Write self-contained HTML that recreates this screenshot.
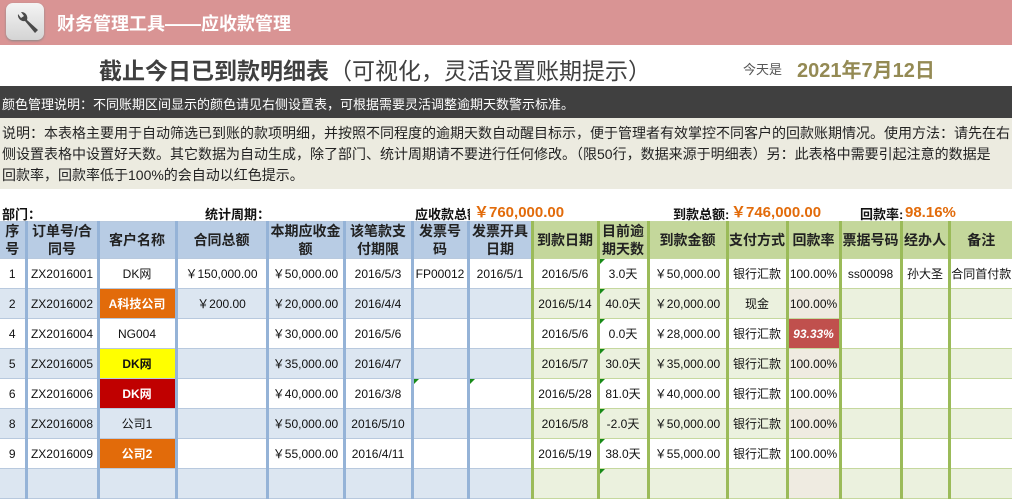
<!DOCTYPE html>
<html><head><meta charset="utf-8"><style>
*{margin:0;padding:0;box-sizing:border-box}
body{width:1012px;height:474px;overflow:hidden;background:#fff;font-family:"Liberation Sans","Noto Sans CJK SC",sans-serif;color:#111;position:relative}
.a{position:absolute;white-space:nowrap}
.v{line-height:20px;font-size:15px;font-weight:bold;color:#e26b0a;top:203px}
table{position:absolute;left:0;top:221px;border-collapse:collapse;table-layout:fixed;width:1012px}
td{text-align:center;font-size:12px;height:30px;border-top:1px solid #b8c9de;border-bottom:1px solid #b8c9de;border-left:3px solid #95b3d7;padding:0;overflow:hidden;white-space:nowrap;position:relative}
tr.h td{height:37px;background:#b8cce4;font-weight:bold;font-size:14px;line-height:18px;white-space:normal;color:#222}
tr.h td.g{background:#c4d79b}
td.g{border-left:3px solid #9bbb59;border-top-color:#c5d89e;border-bottom-color:#c5d89e}
tr.e td{background:#dce6f1}
tr.e td.g{background:#ebf1de}
tr.e td.r{background:#efebe1}
td:first-child{border-left:none}
.tri:before{content:"";position:absolute;left:0;top:0;border-top:5px solid #178a17;border-right:5px solid transparent}
</style></head><body>
<div class="a" style="left:0;top:0;width:1012px;height:45px;background:#d99494"></div>
<div class="a" style="left:6px;top:3px;width:38px;height:37px;border-radius:7px;background:linear-gradient(#f4f4f4,#d4d4d4);box-shadow:0 1px 2px #888">
<svg width="38" height="37" viewBox="0 0 38 37"><path d="M12 11 a6 6 0 0 0 7 7 l10 12 l3 -3 l-11 -10 a6 6 0 0 0 -6 -8 l3 4 l-3 2 z" fill="#4a4a4a"/></svg></div>
<div class="a" style="left:57px;top:10px;font-size:18px;font-weight:bold;color:#fff">财务管理工具——应收款管理</div>
<div class="a" style="left:99px;top:52px;font-size:23px;color:#404040"><b>截止今日已到款明细表</b>（可视化，灵活设置账期提示）</div>
<div class="a" style="left:743px;top:59px;font-size:13px;color:#555">今天是</div>
<div class="a" style="left:797px;top:54px;font-size:20px;font-weight:bold;color:#948a54">2021年7月12日</div>
<div class="a" style="left:0;top:86px;width:1012px;height:32px;background:#404040"></div>
<div class="a" style="left:2px;top:94px;font-size:13px;color:#fff">颜色管理说明：不同账期区间显示的颜色请见右侧设置表，可根据需要灵活调整逾期天数警示标准。</div>
<div class="a" style="left:0;top:118px;width:1012px;height:71px;background:#ecebe0"></div>
<div class="a" style="left:2px;top:123px;width:1010px;overflow:hidden;font-size:14px;letter-spacing:0;line-height:21px;color:#222">说明：本表格主要用于自动筛选已到账的款项明细，并按照不同程度的逾期天数自动醒目标示，便于管理者有效掌控不同客户的回款账期情况。使用方法：请先在右<br>侧设置表格中设置好天数。其它数据为自动生成，除了部门、统计周期请不要进行任何修改。（限50行，数据来源于明细表）另：此表格中需要引起注意的数据是<br>回款率，回款率低于100%的会自动以红色提示。</div>
<div class="a" style="left:2px;top:204px;font-size:13px;font-weight:bold">部门：</div>
<div class="a" style="left:205px;top:204px;font-size:13px;font-weight:bold">统计周期：</div>
<div class="a" style="left:415px;top:204px;font-size:13px;font-weight:bold;width:55px;overflow:hidden">应收款总额</div>
<div class="a v" style="left:474px">￥760,000.00</div>
<div class="a" style="left:673px;top:204px;font-size:13px;font-weight:bold">到款总额:</div>
<div class="a v" style="left:731px">￥746,000.00</div>
<div class="a" style="left:860px;top:204px;font-size:13px;font-weight:bold">回款率:</div>
<div class="a v" style="left:905px">98.16%</div>
<table>
<colgroup><col style="width:26px"><col style="width:72px"><col style="width:78px"><col style="width:91px"><col style="width:77px"><col style="width:68px"><col style="width:56px"><col style="width:64px"><col style="width:66px"><col style="width:50px"><col style="width:79px"><col style="width:60px"><col style="width:53px"><col style="width:61px"><col style="width:48px"><col style="width:63px"></colgroup>
<tr class="h"><td>序号</td><td>订单号/合同号</td><td>客户名称</td><td>合同总额</td><td>本期应收金额</td><td>该笔款支付期限</td><td>发票号码</td><td>发票开具日期</td><td class="g">到款日期</td><td class="g">目前逾期天数</td><td class="g">到款金额</td><td class="g">支付方式</td><td class="g">回款率</td><td class="g">票据号码</td><td class="g">经办人</td><td class="g">备注</td></tr>
<tr><td>1</td><td>ZX2016001</td><td>DK网</td><td>￥150,000.00</td><td>￥50,000.00</td><td>2016/5/3</td><td>FP00012</td><td>2016/5/1</td><td class="g">2016/5/6</td><td class="g tri">3.0天</td><td class="g">￥50,000.00</td><td class="g">银行汇款</td><td class="g r">100.00%</td><td class="g">ss00098</td><td class="g">孙大圣</td><td class="g">合同首付款</td></tr>
<tr class="e"><td>2</td><td>ZX2016002</td><td style="background:#e26b0a;color:#fff;font-weight:bold">A科技公司</td><td>￥200.00</td><td>￥20,000.00</td><td>2016/4/4</td><td></td><td></td><td class="g">2016/5/14</td><td class="g tri">40.0天</td><td class="g">￥20,000.00</td><td class="g">现金</td><td class="g r">100.00%</td><td class="g"></td><td class="g"></td><td class="g"></td></tr>
<tr><td>4</td><td>ZX2016004</td><td>NG004</td><td></td><td>￥30,000.00</td><td>2016/5/6</td><td></td><td></td><td class="g">2016/5/6</td><td class="g tri">0.0天</td><td class="g">￥28,000.00</td><td class="g">银行汇款</td><td class="g" style="background:#c0504d;color:#fff;font-weight:bold;font-style:italic">93.33%</td><td class="g"></td><td class="g"></td><td class="g"></td></tr>
<tr class="e"><td>5</td><td>ZX2016005</td><td style="background:#ffff00;font-weight:bold">DK网</td><td></td><td>￥35,000.00</td><td>2016/4/7</td><td></td><td></td><td class="g">2016/5/7</td><td class="g tri">30.0天</td><td class="g">￥35,000.00</td><td class="g">银行汇款</td><td class="g r">100.00%</td><td class="g"></td><td class="g"></td><td class="g"></td></tr>
<tr><td>6</td><td>ZX2016006</td><td style="background:#c00000;color:#fff;font-weight:bold">DK网</td><td></td><td>￥40,000.00</td><td>2016/3/8</td><td class="tri"></td><td class="tri"></td><td class="g">2016/5/28</td><td class="g tri">81.0天</td><td class="g">￥40,000.00</td><td class="g">银行汇款</td><td class="g r" style="background:#fff">100.00%</td><td class="g"></td><td class="g"></td><td class="g"></td></tr>
<tr class="e"><td>8</td><td>ZX2016008</td><td>公司1</td><td></td><td>￥50,000.00</td><td>2016/5/10</td><td></td><td></td><td class="g">2016/5/8</td><td class="g tri">-2.0天</td><td class="g">￥50,000.00</td><td class="g">银行汇款</td><td class="g r">100.00%</td><td class="g"></td><td class="g"></td><td class="g"></td></tr>
<tr><td>9</td><td>ZX2016009</td><td style="background:#e26b0a;color:#fff;font-weight:bold">公司2</td><td></td><td>￥55,000.00</td><td>2016/4/11</td><td></td><td></td><td class="g">2016/5/19</td><td class="g tri">38.0天</td><td class="g">￥55,000.00</td><td class="g">银行汇款</td><td class="g r" style="background:#fff">100.00%</td><td class="g"></td><td class="g"></td><td class="g"></td></tr>
<tr class="e"><td></td><td></td><td></td><td></td><td></td><td></td><td></td><td></td><td class="g"></td><td class="g tri"></td><td class="g"></td><td class="g"></td><td class="g r"></td><td class="g"></td><td class="g"></td><td class="g"></td></tr>
</table>
</body></html>
